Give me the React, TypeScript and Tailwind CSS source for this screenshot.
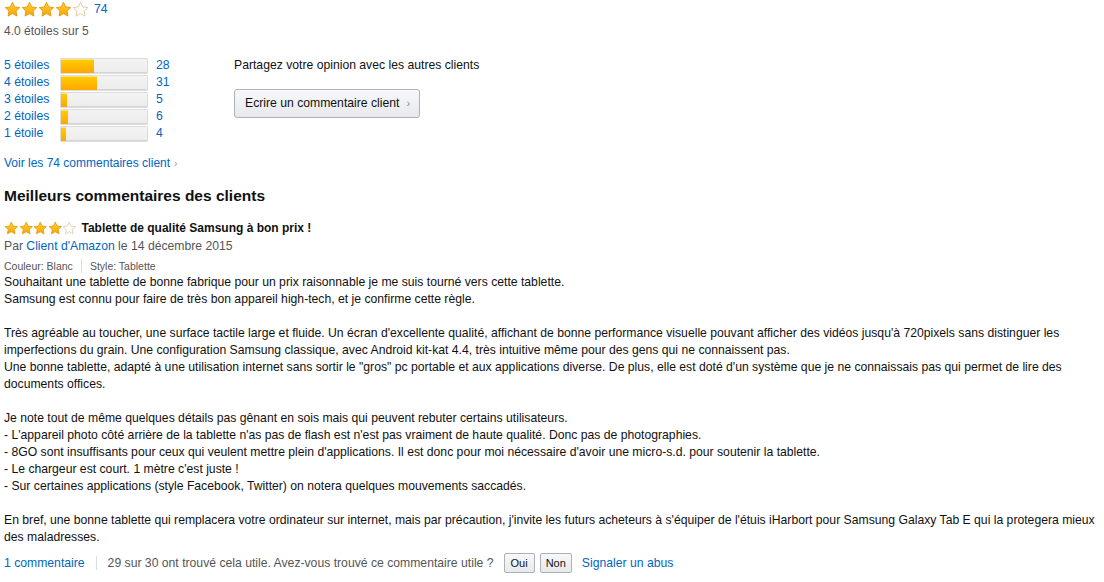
import React from 'react';

const HISTOGRAM = [
    { label: '5 étoiles', count: 28 },
    { label: '4 étoiles', count: 31 },
    { label: '3 étoiles', count: 5 },
    { label: '2 étoiles', count: 6 },
    { label: '1 étoile', count: 4 },
];

const STAR_PATH = 'M12 1.8l3.1 6.6 7.1.9-5.2 4.9 1.3 7.1L12 17.8l-6.3 3.5 1.3-7.1L1.8 9.3l7.1-.9z';

function Star({ filled, size }: { filled: boolean; size: number }) {
    return (
        <svg width={size} height={size} viewBox="0 0 24 24" className="shrink-0">
            <defs>
                <linearGradient id="starFill" x1="0" y1="0" x2="0" y2="1">
                    <stop offset="0" stopColor="#ffd23a" />
                    <stop offset="1" stopColor="#f7a300" />
                </linearGradient>
            </defs>
            <path
                d={STAR_PATH}
                fill={filled ? 'url(#starFill)' : '#fff'}
                stroke={filled ? '#e49400' : '#d9c49a'}
                strokeWidth="1.2"
                strokeLinejoin="round"
            />
        </svg>
    );
}

function Stars({ rating, size }: { rating: number; size: number }) {
    return (
        <div className="flex items-center">
            {[0, 1, 2, 3, 4].map((i) => (
                <Star key={i} filled={i < rating} size={size} />
            ))}
        </div>
    );
}

const Chevron = () => <span className="ml-1 text-[10px] text-[#999]">›</span>;

export default function App() {
    return (
        <div className="w-[1104px] h-[582px] overflow-hidden bg-white px-1 text-[12.2px] leading-[17px] text-[#111] font-['Liberation_Sans',Arial,sans-serif]">
            {/* Summary */}
            <div className="flex items-center gap-[5px] pt-[1px]">
                <Stars rating={4} size={17} />
                <a className="text-[#0066c0]">74</a>
            </div>
            <div className="mt-[5px] text-[12px] text-[#555]">4.0 étoiles sur 5</div>

            <div className="mt-[17px] flex">
                <div className="w-[230px]">
                    {HISTOGRAM.map((row) => (
                        <div key={row.label} className="flex h-[17px] items-center text-[#0066c0]">
                            <span className="w-[56px]">{row.label}</span>
                            <div className="h-[16px] w-[88px] rounded-[1px] border border-[#ddd] bg-gradient-to-b from-[#f3f3f3] to-[#ececec] shadow-[inset_0_-1px_0_#d5d5d5]">
                                <div
                                    className="h-full bg-gradient-to-b from-[#ffce00] to-[#ffa700] shadow-[inset_0_1px_0_#ffe27a]"
                                    style={{ width: `${(row.count / 74) * 100}%` }}
                                />
                            </div>
                            <span className="ml-[8px]">{row.count}</span>
                        </div>
                    ))}
                </div>
                <div>
                    <div className="h-[17px]">Partagez votre opinion avec les autres clients</div>
                    <button className="mt-[15px] flex h-[29px] items-center rounded-[3px] border border-[#adb1b8] bg-gradient-to-b from-[#f7f8fa] to-[#e7e9ec] pl-[10px] pr-[9px] text-[12.2px] text-[#111] shadow-[inset_0_1px_0_rgba(255,255,255,0.6)]">
                        Ecrire un commentaire client
                        <span className="ml-[7px] text-[11px] text-[#888]">›</span>
                    </button>
                </div>
            </div>

            <a className="mt-[13px] block text-[12px] text-[#0066c0]">
                Voir les 74 commentaires client
                <Chevron />
            </a>

            <h2 className="mt-[14px] text-[15.5px] font-bold leading-[19px] text-[#111]">
                Meilleurs commentaires des clients
            </h2>

            {/* Review */}
            <div className="mt-[15px] flex items-center gap-[5px]">
                <Stars rating={4} size={14.5} />
                <span className="text-[12px] font-bold">Tablette de qualité Samsung à bon prix !</span>
            </div>
            <div className="mt-[1px] text-[#555]">
                Par <a className="text-[#0066c0]">Client d'Amazon</a> le 14 décembre 2015
            </div>
            <div className="mt-[4px] flex items-center text-[10.5px] leading-[14px] text-[#555]">
                <span>Couleur: Blanc</span>
                <span className="mx-[8px] h-[14px] w-px bg-[#ddd]" />
                <span>Style: Tablette</span>
            </div>
            <div className="mt-[1px] text-[12.2px] leading-[17px] text-[#111]">
                <p>Souhaitant une tablette de bonne fabrique pour un prix raisonnable je me suis tourné vers cette tablette.</p>
                <p>Samsung est connu pour faire de très bon appareil high-tech, et je confirme cette règle.</p>
                <p className="h-[17px]" />
                <p>
                    Très agréable au toucher, une surface tactile large et fluide. Un écran d'excellente qualité, affichant de bonne performance visuelle pouvant afficher des vidéos jusqu'à 720pixels sans distinguer les imperfections du grain. Une configuration Samsung classique, avec Android kit-kat 4.4, très intuitive même pour des gens qui ne connaissent pas.
                </p>
                <p>
                    Une bonne tablette, adapté à une utilisation internet sans sortir le "gros" pc portable et aux applications diverse. De plus, elle est doté d'un système que je ne connaissais pas qui permet de lire des documents offices.
                </p>
                <p className="h-[17px]" />
                <p>Je note tout de même quelques détails pas gênant en sois mais qui peuvent rebuter certains utilisateurs.</p>
                <p>- L'appareil photo côté arrière de la tablette n'as pas de flash est n'est pas vraiment de haute qualité. Donc pas de photographies.</p>
                <p>- 8GO sont insuffisants pour ceux qui veulent mettre plein d'applications. Il est donc pour moi nécessaire d'avoir une micro-s.d. pour soutenir la tablette.</p>
                <p>- Le chargeur est court. 1 mètre c'est juste !</p>
                <p>- Sur certaines applications (style Facebook, Twitter) on notera quelques mouvements saccadés.</p>
                <p className="h-[17px]" />
                <p>
                    En bref, une bonne tablette qui remplacera votre ordinateur sur internet, mais par précaution, j'invite les futurs acheteurs à s'équiper de l'étuis iHarbort pour Samsung Galaxy Tab E qui la protegera mieux des maladresses.
                </p>
            </div>

            {/* Footer */}
            <div className="mt-[7px] flex items-center text-[12.2px] text-[#555]">
                <a className="text-[#0066c0]">1 commentaire</a>
                <span className="mx-[11px] h-[14px] w-px bg-[#ddd]" />
                <span>29 sur 30 ont trouvé cela utile. Avez-vous trouvé ce commentaire utile ?</span>
                <button className="ml-[10px] h-[20px] rounded-[2px] border border-[#adb1b8] bg-gradient-to-b from-[#f7f8fa] to-[#e7e9ec] px-[6px] text-[11px] leading-[18px] text-[#111]">
                    Oui
                </button>
                <button className="ml-[5px] h-[20px] rounded-[2px] border border-[#adb1b8] bg-gradient-to-b from-[#f7f8fa] to-[#e7e9ec] px-[5px] text-[11px] leading-[18px] text-[#111]">
                    Non
                </button>
                <a className="ml-[10px] text-[#0066c0]">Signaler un abus</a>
            </div>
        </div>
    );
}
